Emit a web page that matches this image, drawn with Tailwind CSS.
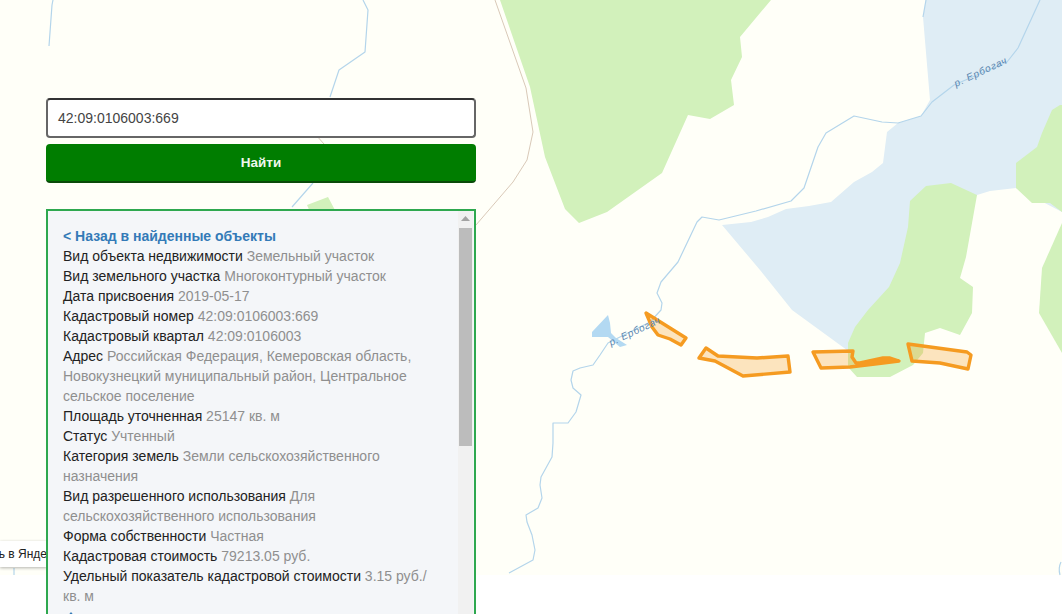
<!DOCTYPE html>
<html lang="ru">
<head>
<meta charset="utf-8">
<script src="https://cdn.jsdelivr.net/npm/@tailwindcss/browser@4"></script>
</head>
<body class="m-0 bg-white">
<div class="relative w-[1062px] h-[614px] overflow-hidden bg-white font-['Liberation_Sans',Arial,sans-serif]">
  <svg class="absolute inset-0 w-[1062px] h-[614px]" viewBox="0 0 1062 614" fill="none">
    <rect width="1062" height="575" fill="#fffff8"/>
    <polygon fill="#dfedf5" points="926,0 1062,0 1062,212 1016,188 990,191 977,195 900,330 851,353 792,310 760,270 722,225 751,222 768,217 786,209 809,206 831,202 854,182 872,172 883,163 887,132 898,123 921,116 930,100 923,17"/>
    <polygon fill="#d2f1bb" points="500,0 771,0 740,37 742,57 731,80 734,105 710,119 688,115 662,173 607,212 579,223 565,209 545,157 530,87"/>
    <polygon fill="#d2f1bb" points="977,195 951,183 926,186 910,201 908,227 900,263 889,287 868,310 855,327 848,343 848,367 857,377 890,377 913,365 923,353 925,333 940,328 960,335 972,313 973,287 960,278 966,257"/>
    <polygon fill="#d2f1bb" points="1062,105 1060,105 1052,110 1042,133 1037,147 1016,163 1016,188 1032,203 1050,203 1062,212"/>
    <polygon fill="#d2f1bb" points="1062,223 1042,268 1039,313 1062,353"/>
    <polygon fill="#d2f1bb" points="307,205 328,197 336,212 310,212"/>
    <polyline stroke="#d9c9b8" stroke-width="1" points="495,0 526,88 533,132 527,160 513,182 476,225"/>
    <polyline stroke="#d9c9b8" stroke-width="1" points="316,135 324,144"/>
    <g stroke="#b4d5eb" stroke-width="1.2" stroke-linejoin="round">
      <polyline points="1040,0 1018,48 1007,62 954,85 932,102 921,116 898,123 882,122 854,116 826,133 818,147 804,188 791,201 756,211 719,220 702,217 697,222 678,262 661,282 657,293 662,303 661,310 650,322 608,343 600,355 593,365 580,368 573,371 571,380 573,388 581,395 576,412 568,423 553,423 553,443 552,457 541,477 540,485 542,498 538,508 526,515 527,522 532,535 535,550 533,560 509,573"/>
      <polyline points="363,0 368,10 365,52 339,70 330,97"/>
      <polyline points="313,183 292,207"/>
      <polyline points="53,0 52,5 49,46"/>
      <polyline points="926,0 923,17"/>
      <polyline points="14,568 14,575"/>
      <path d="M1061 562q-3 6 -1 13"/>
    </g>
    <polygon fill="#b3d9f2" points="608,315 610,323 611,333 616,338 627,345 620,347 608,337 592,337 592,332"/>
    <g fill="#f59b21" fill-opacity="0.27" stroke="#f59b21" stroke-width="3.4" stroke-linejoin="round">
      <polygon points="646,313 686,338 681,345 670,339 658,335 652,327"/>
      <polygon points="706,348 718,356 757,358 788,356 790,372 743,376 715,361 699,358"/>
      <polygon points="813,352 853,351 852,357 856,363 860,363 883,358 890,358 899,361 883,363 850,367 821,368"/>
      <polygon points="908,344 967,352 971,355 968,369 940,363 912,361"/>
    </g>
    <polygon fill="#f59b21" points="860,363 883,358 890,358 899,361 883,363"/>
    <text x="0" y="0" transform="translate(611 346) rotate(-25)" font-family="Liberation Sans" font-size="10" font-style="italic" letter-spacing="0.6" fill="#5a86b0">р. Ербогач</text>
    <text x="0" y="0" transform="translate(956 87) rotate(-25)" font-family="Liberation Sans" font-size="10" font-style="italic" letter-spacing="0.8" fill="#5a86b0">р. Ербогач</text>
  </svg>

  <div class="absolute left-0 top-[541px] w-[47px] h-[26px] overflow-hidden bg-white shadow-[0_1px_3px_rgba(0,0,0,0.3)] flex items-center justify-end">
    <span class="text-[12px] leading-[16px] text-[#222] whitespace-nowrap">ь в Янде</span>
  </div>

  <div class="absolute inset-0 pl-[46px] pt-[98px] flex flex-col items-start">
    <div class="w-[430px] h-[40px] border-2 border-[#666] border-t-[#333] rounded-[4px] bg-white flex items-center pl-[10px] pt-[2px] text-[14px] text-[#444]">42:09:0106003:669</div>
    <div class="w-[430px] h-[40px] mt-[6px] rounded-[4px] bg-[#007d00] border-b-2 border-[#0a4a0a] flex items-center justify-center pt-[2px] text-[13.5px] font-bold text-[#eef8ee]">Найти</div>
    <div class="relative w-[430px] h-[410px] mt-[26px] border-2 border-b-0 border-[#2ea84f] bg-[#f4f6f9] overflow-hidden pt-[15px] pl-[15px] pr-[30px] text-[14px] leading-[20px] text-[#8f8f8f]">
      <p class="font-bold text-[#337ab7]">&lt; Назад в найденные объекты</p>
      <p><span class="text-[#222]">Вид объекта недвижимости</span> Земельный участок</p>
      <p><span class="text-[#222]">Вид земельного участка</span> Многоконтурный участок</p>
      <p><span class="text-[#222]">Дата присвоения</span> 2019-05-17</p>
      <p><span class="text-[#222]">Кадастровый номер</span> 42:09:0106003:669</p>
      <p><span class="text-[#222]">Кадастровый квартал</span> 42:09:0106003</p>
      <p><span class="text-[#222]">Адрес</span> Российская Федерация, Кемеровская область, Новокузнецкий муниципальный район, Центральное сельское поселение</p>
      <p><span class="text-[#222]">Площадь уточненная</span> 25147 кв. м</p>
      <p><span class="text-[#222]">Статус</span> Учтенный</p>
      <p><span class="text-[#222]">Категория земель</span> Земли сельскохозяйственного назначения</p>
      <p><span class="text-[#222]">Вид разрешенного использования</span> Для сельскохозяйственного использования</p>
      <p><span class="text-[#222]">Форма собственности</span> Частная</p>
      <p><span class="text-[#222]">Кадастровая стоимость</span> 79213.05 руб.</p>
      <p><span class="text-[#222]">Удельный показатель кадастровой стоимости</span> 3.15 руб./ кв. м</p>
      <svg class="mt-[6px] ml-[3px]" width="10" height="10" viewBox="0 0 10 10"><path d="M5 0L9 5H1Z" fill="#337ab7"/></svg>
      <div class="absolute right-[1px] top-0 bottom-0 w-[15px] bg-[#f1f1f1] flex flex-col items-center">
        <svg class="mt-[5px]" width="9" height="5" viewBox="0 0 9 5"><path d="M4.5 0L9 5H0Z" fill="#a3a3a3"/></svg>
        <div class="w-[13px] h-[218px] mt-[7px] bg-[#bcbcbc]"></div>
      </div>
    </div>
  </div>
</div>
</body>
</html>
